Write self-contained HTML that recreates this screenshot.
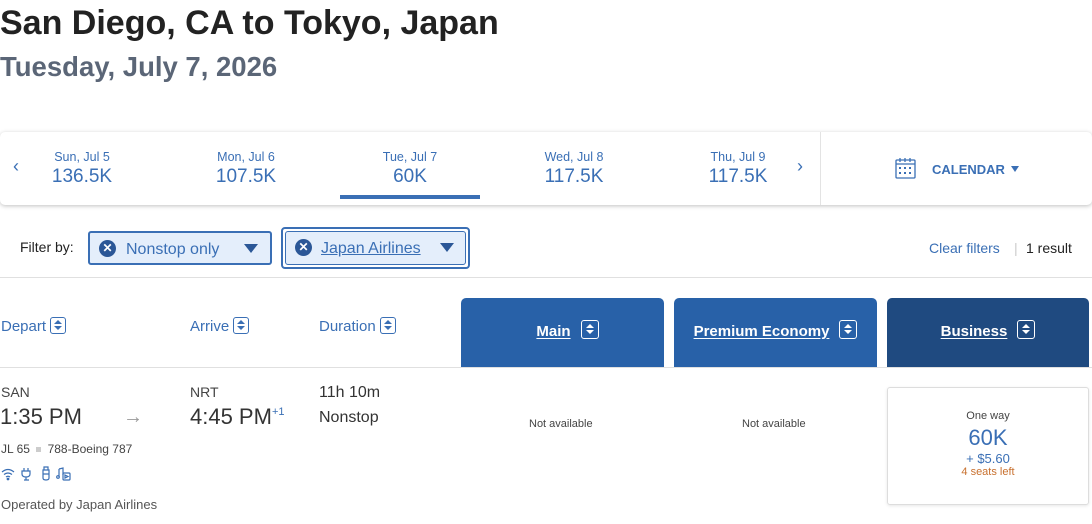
<!DOCTYPE html>
<html><head><meta charset="utf-8"><style>
*{margin:0;padding:0;box-sizing:border-box}
body{width:1092px;height:524px;overflow:hidden;background:#fff;font-family:"Liberation Sans",sans-serif;position:relative;color:#333}
.a{position:absolute;white-space:nowrap}
.blue{color:#3a6fb5}
.date{position:absolute;top:150px;width:140px;text-align:center;color:#3a6fb5}
.date .l{font-size:12.5px}
.date .p{font-size:19px;margin-top:2px;font-weight:300}
.sort{display:inline-block;width:16px;height:17px;border:1.5px solid currentColor;border-radius:3px;vertical-align:-3px;margin-left:4px;position:relative}
.sort:before{content:"";position:absolute;left:3px;top:2px;border:4px solid transparent;border-bottom:4px solid currentColor;border-top:0}
.sort:after{content:"";position:absolute;left:3px;top:8px;border:4px solid transparent;border-top:4px solid currentColor;border-bottom:0}
.tab{position:absolute;top:298px;height:69px;border-radius:5px 5px 0 0;color:#fff;font-weight:bold;font-size:15px;text-align:center;line-height:68px}
.tab .sort{width:18px;height:19px;margin-left:10px}
.tab .sort:before{left:4px;top:3px}
.tab .sort:after{left:4px;top:9px}
.tab u{text-underline-offset:2px}
.chip{position:absolute;background:#e4eefb;border:2px solid #3a6fb5;border-radius:3px;color:#3a6fb5;font-size:16px}
.x{position:absolute;left:9px;top:7px;width:17px;height:17px;border-radius:50%;background:#2b5797;color:#fff;font-size:12px;text-align:center;line-height:17px;font-weight:bold}
.caret{position:absolute;width:0;height:0;border-left:7px solid transparent;border-right:7px solid transparent;border-top:9px solid #2b5797}
</style></head><body>
<div class="a" style="left:0;top:4px;font-size:34px;font-weight:bold;color:#222">San Diego, CA to Tokyo, Japan</div>
<div class="a" style="left:0;top:51px;font-size:27.5px;font-weight:bold;color:#5b6677">Tuesday, July 7, 2026</div>

<div class="a" style="left:0;top:132px;width:1092px;height:73px;border-radius:5px;box-shadow:0 1px 4px rgba(0,0,0,.25);background:#fff"></div>
<div class="a blue" style="left:13px;top:156px;font-size:18px">‹</div>
<div class="date" style="left:12px"><div class="l">Sun, Jul 5</div><div class="p">136.5K</div></div>
<div class="date" style="left:176px"><div class="l">Mon, Jul 6</div><div class="p">107.5K</div></div>
<div class="date" style="left:340px"><div class="l">Tue, Jul 7</div><div class="p">60K</div></div>
<div class="a" style="left:340px;top:195px;width:140px;height:4px;background:#3a6fb5"></div>
<div class="date" style="left:504px"><div class="l">Wed, Jul 8</div><div class="p">117.5K</div></div>
<div class="date" style="left:668px"><div class="l">Thu, Jul 9</div><div class="p">117.5K</div></div>
<div class="a blue" style="left:797px;top:156px;font-size:18px">›</div>
<div class="a" style="left:820px;top:132px;width:1px;height:73px;background:#e3e3e3"></div>
<svg class="a" style="left:895px;top:157px" width="21" height="22" viewBox="0 0 21 22" fill="none" stroke="#3a6fb5" stroke-width="1.3"><rect x="1" y="3" width="19" height="18" rx="1"/><path d="M1 7h19M5 1v4M10 1v4M15 1v4"/><g fill="#3a6fb5" stroke="none"><rect x="4" y="10" width="2" height="2"/><rect x="9" y="10" width="2" height="2"/><rect x="14" y="10" width="2" height="2"/><rect x="4" y="15" width="2" height="2"/><rect x="9" y="15" width="2" height="2"/><rect x="14" y="15" width="2" height="2"/></g></svg>
<div class="a blue" style="left:932px;top:162px;font-size:13px;font-weight:bold">CALENDAR</div>
<div class="a" style="left:1011px;top:166px;border-left:4px solid transparent;border-right:4px solid transparent;border-top:6px solid #3a6fb5"></div>

<div class="a" style="left:20px;top:239px;font-size:14px;color:#222">Filter by:</div>
<div class="chip" style="left:88px;top:231px;width:184px;height:34px"><div class="x">✕</div><div class="a" style="left:36px;top:8px">Nonstop only</div><div class="caret" style="left:154px;top:11px"></div></div>
<div class="a" style="left:281px;top:227px;width:189px;height:42px;border:2px solid #3a6fb5;border-radius:4px"></div>
<div class="chip" style="left:285px;top:231px;width:181px;height:34px;border-width:1.5px"><div class="x">✕</div><div class="a" style="left:35px;top:8px;text-decoration:underline">Japan Airlines</div><div class="caret" style="left:154px;top:11px"></div></div>
<div class="a blue" style="left:929px;top:240px;font-size:14px">Clear filters</div>
<div class="a" style="left:1014px;top:240px;font-size:14px;color:#ccc">|</div>
<div class="a" style="left:1026px;top:240px;font-size:14px;color:#222">1 result</div>
<div class="a" style="left:0;top:277px;width:1092px;height:1px;background:#e0e0e0"></div>

<div class="a blue" style="left:1px;top:317px;font-size:15px">Depart<span class="sort"></span></div>
<div class="a blue" style="left:190px;top:317px;font-size:15px">Arrive<span class="sort"></span></div>
<div class="a blue" style="left:319px;top:317px;font-size:15px">Duration<span class="sort"></span></div>
<div class="tab" style="left:461px;width:203px;background:#2861a8;padding-left:10px"><u>Main</u><span class="sort"></span></div>
<div class="tab" style="left:674px;width:203px;background:#2861a8"><u>Premium Economy</u><span class="sort"></span></div>
<div class="tab" style="left:887px;width:202px;background:#1f4a80"><u>Business</u><span class="sort"></span></div>
<div class="a" style="left:0;top:367px;width:1092px;height:1px;background:#e0e0e0"></div>

<div class="a" style="left:1px;top:384px;font-size:14px;color:#444">SAN</div>
<div class="a" style="left:0;top:404px;font-size:22px;color:#333">1:35 PM</div>
<div class="a" style="left:123px;top:406px;font-size:20px;color:#999">→</div>
<div class="a" style="left:190px;top:384px;font-size:14px;color:#444">NRT</div>
<div class="a" style="left:190px;top:404px;font-size:22px;color:#333">4:45 PM<sup style="font-size:11px;color:#3a6fb5;vertical-align:9px">+1</sup></div>
<div class="a" style="left:319px;top:384px;font-size:16px;color:#333">11h 10m</div>
<div class="a" style="left:319px;top:409px;font-size:16px;color:#333">Nonstop</div>
<div class="a" style="left:1px;top:442px;font-size:12px;color:#444">JL 65 <span style="display:inline-block;width:5px;height:5px;background:#ccc;margin:0 3px 1px"></span> 788-Boeing 787</div>
<svg class="a" style="left:1px;top:466px" width="80" height="16" viewBox="0 0 80 16" fill="none" stroke="#3a6fb5" stroke-width="1.2">
<path d="M1 6q6-5 12 0M3 8.5q4-3 8 0M5 11q2-1.5 4 0"/><circle cx="7" cy="13" r="0.8" fill="#3a6fb5"/>
<path d="M23 2v3M27 2v3M21 5h8v3q0 3-4 3t-4-3zM25 11v3M23 14h5"/>
<path d="M43 1h4v3h-4zM42 4h6v8q0 2-3 2t-3-2zM42 8h6"/>
<path d="M58 3l4-1v7M58 3v8"/><circle cx="57" cy="11" r="1.3"/><rect x="62" y="7" width="7" height="7" rx="1"/><path d="M64 9l3 1.5-3 1.5z"/>
</svg>
<div class="a" style="left:1px;top:497px;font-size:13px;color:#555">Operated by Japan Airlines</div>

<div class="a" style="left:529px;top:418px;font-size:11px;color:#444">Not available</div>
<div class="a" style="left:742px;top:418px;font-size:11px;color:#444">Not available</div>
<div class="a" style="left:887px;top:387px;width:202px;height:118px;border:1px solid #ddd;border-radius:3px;box-shadow:0 1px 3px rgba(0,0,0,.1);text-align:center">
<div style="margin-top:22px;font-size:11px;color:#444">One way</div>
<div style="font-size:22px;color:#3a6fb5;margin-top:3px">60K</div>
<div style="font-size:13px;color:#3a6fb5">+ $5.60</div>
<div style="font-size:11px;color:#c8702e">4 seats left</div>
</div>
</body></html>
